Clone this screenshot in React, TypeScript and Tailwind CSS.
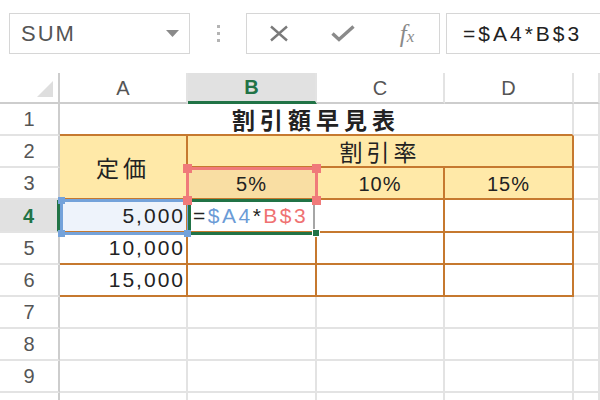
import React from "react";

const OR = "border-[#c6792f]";
const GR = "border-[#e3e3e3]";

function RowHead({ n, sel }: { n?: number; sel?: boolean }) {
  return sel ? (
    <div className="flex items-center justify-center border-b-2 border-r-[3px] border-b-[#e3e3e3] border-r-[#217346] bg-[#e1e1e1] text-[20px] font-bold text-[#217346]">
      {n}
    </div>
  ) : (
    <div className="flex items-center justify-center border-b-2 border-r-2 border-b-[#e3e3e3] border-r-[#cdcdcd] text-[20px] text-[#555]">
      {n}
    </div>
  );
}

function Grey() {
  return <div className={`border-b-2 border-r-2 ${GR}`} />;
}

function Box({ className = "", children }: { className?: string; children?: React.ReactNode }) {
  return <div className={`border-b-2 border-r-2 ${OR} ${className}`}>{children}</div>;
}

const JP = "font-['Noto_Sans_CJK_JP',sans-serif]";

export default function App() {
  return (
    <div className="relative h-[400px] w-[600px] overflow-hidden bg-white font-['Liberation_Sans',sans-serif] text-[#222]">
      {/* formula bar */}
      <div className="flex h-[73px] items-start pt-[13px]">
        <div className="ml-[9px] flex h-[41px] w-[181px] items-center justify-between border border-[#d6d6d6] pl-[11px] pr-[10px]">
          <span className="text-[22px] tracking-[2px] text-[#555]">SUM</span>
          <svg width="13" height="7" viewBox="0 0 13 7">
            <polygon points="0,0 13,0 6.5,7" fill="#8a8a8a" />
          </svg>
        </div>
        <div className="flex h-[41px] w-[56px] flex-col items-center justify-center gap-[4px]">
          <div className="h-[3px] w-[3px] bg-[#b4b4b4]" />
          <div className="h-[3px] w-[3px] bg-[#b4b4b4]" />
          <div className="h-[3px] w-[3px] bg-[#b4b4b4]" />
        </div>
        <div className="flex h-[41px] w-[194px] items-center border border-[#d6d6d6]">
          <div className="flex w-[64px] justify-center">
            <svg width="20" height="17" viewBox="0 0 20 17">
              <path d="M2 1.5 L18 15.5 M18 1.5 L2 15.5" stroke="#7a7a7a" strokeWidth="2.4" />
            </svg>
          </div>
          <div className="flex w-[64px] justify-center">
            <svg width="24" height="17" viewBox="0 0 24 17">
              <path d="M1.5 8.5 L8 14.5 L22.5 1.5" stroke="#8a8a8a" strokeWidth="3.4" fill="none" />
            </svg>
          </div>
          <div className="flex w-[64px] justify-center">
            <span className="font-['Liberation_Serif',serif] text-[25px] italic leading-none text-[#8a8a8a]">
              f<span className="text-[17px]">x</span>
            </span>
          </div>
        </div>
        <div className="-mr-[20px] ml-[6px] flex h-[41px] flex-1 items-center border border-[#d6d6d6] pl-[16px]">
          <span className="text-[21px] tracking-[3px] text-[#222]">=$A4*B$3</span>
        </div>
      </div>

      {/* sheet */}
      <div className="relative grid grid-cols-[60px_128px_129px_128px_129px_1fr] grid-rows-[31px_32px_32px_32px_33px_32px_32px_32px_32px_32px_32px]">
        {/* header row */}
        <div className="relative border-b-2 border-r-2 border-[#cdcdcd]">
          <svg className="absolute left-[37px] top-[8px]" width="16" height="16" viewBox="0 0 16 16">
            <polygon points="16,0 16,16 0,16" fill="#dedede" />
          </svg>
        </div>
        <div className="flex items-center justify-center border-b-2 border-r-2 border-b-[#cdcdcd] border-r-[#e3e3e3] text-[20px] text-[#555]">A</div>
        <div className="flex items-center justify-center border-b-[3px] border-r-2 border-b-[#217346] border-r-[#e3e3e3] bg-[#e1e1e1] text-[20px] font-bold text-[#217346]">B</div>
        <div className="flex items-center justify-center border-b-2 border-r-2 border-b-[#cdcdcd] border-r-[#e3e3e3] text-[20px] text-[#555]">C</div>
        <div className="flex items-center justify-center border-b-2 border-r-2 border-b-[#cdcdcd] border-r-[#e3e3e3] text-[20px] text-[#555]">D</div>
        <div className="border-b-2 border-r-2 border-b-[#cdcdcd] border-r-[#e3e3e3]" />

        {/* row 1 */}
        <RowHead n={1} />
        <div className={`col-span-4 flex items-center justify-center border-b-2 border-r-2 border-b-[#c6792f] border-r-[#e3e3e3] ${JP} text-[23px] font-bold tracking-[5px] text-[#222]`}>
          割引額早見表
        </div>
        <Grey />

        {/* row 2 */}
        <RowHead n={2} />
        <Box className={`row-span-2 flex items-center justify-center bg-[#ffe9a8] ${JP} text-[23px] tracking-[4px]`}>定価</Box>
        <Box className={`col-span-3 flex items-center justify-center bg-[#ffe9a8] ${JP} text-[23px] tracking-[4px]`}>割引率</Box>
        <Grey />

        {/* row 3 */}
        <RowHead n={3} />
        <Box className="flex items-center justify-center bg-[#f9dea3] pt-[2px] text-[20px] tracking-[1px]">5%</Box>
        <Box className="flex items-center justify-center bg-[#ffe9a8] pt-[2px] text-[20px] tracking-[1px]">10%</Box>
        <Box className="flex items-center justify-center bg-[#ffe9a8] pt-[2px] text-[20px] tracking-[1px]">15%</Box>
        <Grey />

        {/* row 4 */}
        <RowHead n={4} sel />
        <Box className="flex items-center justify-end bg-[#eef3fb] pr-[1px] text-[21px] tracking-[2px]">5,000</Box>
        <div className="flex items-center border-b-2 border-r-2 border-b-[#c6792f] border-r-white pl-[5px] text-[21px] tracking-[2.5px]">
          <span>=</span>
          <span className="text-[#6b9bd6]">$A4</span>
          <span>*</span>
          <span className="text-[#ef7272]">B$3</span>
        </div>
        <Box />
        <Box />
        <Grey />

        {/* row 5 */}
        <RowHead n={5} />
        <Box className="flex items-center justify-end pr-[1px] text-[21px] tracking-[2px]">10,000</Box>
        <Box />
        <Box />
        <Box />
        <Grey />

        {/* row 6 */}
        <RowHead n={6} />
        <Box className="flex items-center justify-end pr-[1px] text-[21px] tracking-[2px]">15,000</Box>
        <Box />
        <Box />
        <Box />
        <Grey />

        {[7, 8, 9, 10].map((n) => (
          <React.Fragment key={n}>
            <RowHead n={n < 10 ? n : undefined} />
            <Grey />
            <Grey />
            <Grey />
            <Grey />
            <Grey />
          </React.Fragment>
        ))}

        {/* overlays: reference boxes */}
        <div className="absolute left-[60px] top-[126px] h-[36px] w-[130px] border-[3px] border-[#74a2da]" />
        <div className="absolute left-[186px] top-[94px] h-[35px] w-[132px] border-[3px] border-[#f07a7a]" />
        <div className="absolute left-[188px] top-[126px] h-[36px] w-[127px] border-y-[3px] border-l-[3px] border-r-2 border-y-[#217346] border-l-[#217346] border-r-[#a6a6a6]" />

        {/* handles */}
        <div className="absolute left-[183px] top-[91px] h-[9px] w-[9px] bg-[#f07a7a]" />
        <div className="absolute left-[312px] top-[91px] h-[9px] w-[9px] bg-[#f07a7a]" />
        <div className="absolute left-[183px] top-[123px] h-[9px] w-[9px] bg-[#f07a7a]" />
        <div className="absolute left-[312px] top-[123px] h-[9px] w-[9px] bg-[#f07a7a]" />
        <div className="absolute left-[58px] top-[124px] h-[7px] w-[7px] bg-[#74a2da]" />
        <div className="absolute left-[58px] top-[157px] h-[7px] w-[7px] bg-[#74a2da]" />
        <div className="absolute left-[184px] top-[157px] h-[7px] w-[7px] bg-[#74a2da]" />
        <div className="absolute left-[312px] top-[156px] h-[8px] w-[8px] border border-white bg-[#217346]" />
      </div>
    </div>
  );
}
